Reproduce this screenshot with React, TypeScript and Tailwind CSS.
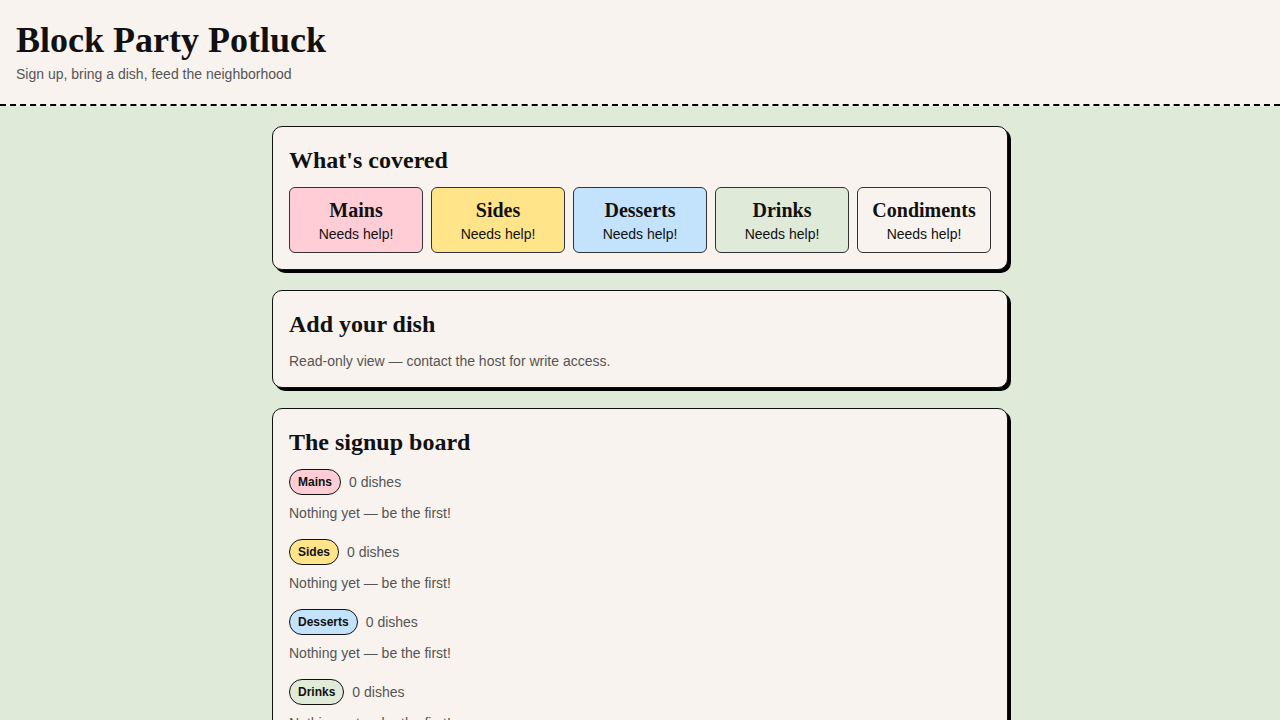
const categories = [
  { name: "Mains", tile: "bg-[#ffcdd5]" },
  { name: "Sides", tile: "bg-[#ffe48a]" },
  { name: "Desserts", tile: "bg-[#c3e2fb]" },
  { name: "Drinks", tile: "bg-[#dfead8]" },
  { name: "Condiments", tile: "bg-[#f8f3ee]" },
]

function Card({ title, children }: { title: string; children: React.ReactNode }) {
  return (
    <section className="rounded-[10px] border border-[#111] bg-[#f8f3ee] px-4 pt-4 pb-4 shadow-[3px_3px_0_#000]">
      <h2 className="mb-[10px] font-['Liberation_Serif',serif] text-2xl leading-[34px] font-bold text-[#111]">{title}</h2>
      {children}
    </section>
  )
}

export default function App() {
  return (
    <div className="min-h-screen bg-[#dfead8] font-['Liberation_Sans',Arial,sans-serif]">
      <header className="border-b-2 border-dashed border-black bg-[#f8f3ee] px-4 pt-4 pb-[19px]">
        <h1 className="font-['Liberation_Serif',serif] text-[36px] leading-[48px] font-bold text-[#111]">
          Block Party Potluck
        </h1>
        <p className="text-sm leading-[21px] text-[#555]">Sign up, bring a dish, feed the neighborhood</p>
      </header>

      <main className="mx-auto flex w-[736px] flex-col gap-5 pt-5 pb-10">
        <Card title="What's covered">
          <div className="grid grid-cols-5 gap-2">
            {categories.map((c) => (
              <div key={c.name} className={`rounded-md border border-[#333] py-2 text-center ${c.tile}`}>
                <div className="font-['Liberation_Serif',serif] text-xl leading-7 font-bold text-[#111]">{c.name}</div>
                <div className="text-sm leading-5 text-[#111]">Needs help!</div>
              </div>
            ))}
          </div>
        </Card>

        <Card title="Add your dish">
          <p className="text-sm leading-5 text-[#555]">Read-only view — contact the host for write access.</p>
        </Card>

        <Card title="The signup board">
          <div className="flex flex-col gap-4">
            {categories.map((c) => (
              <div key={c.name}>
                <div className="mb-2 flex items-center gap-2">
                  <span className={`rounded-full border border-[#111] px-2 py-1 text-xs leading-4 font-semibold text-[#111] ${c.tile}`}>
                    {c.name}
                  </span>
                  <span className="text-sm text-[#555]">0 dishes</span>
                </div>
                <p className="text-sm leading-5 text-[#555]">Nothing yet — be the first!</p>
              </div>
            ))}
          </div>
        </Card>
      </main>
    </div>
  )
}
